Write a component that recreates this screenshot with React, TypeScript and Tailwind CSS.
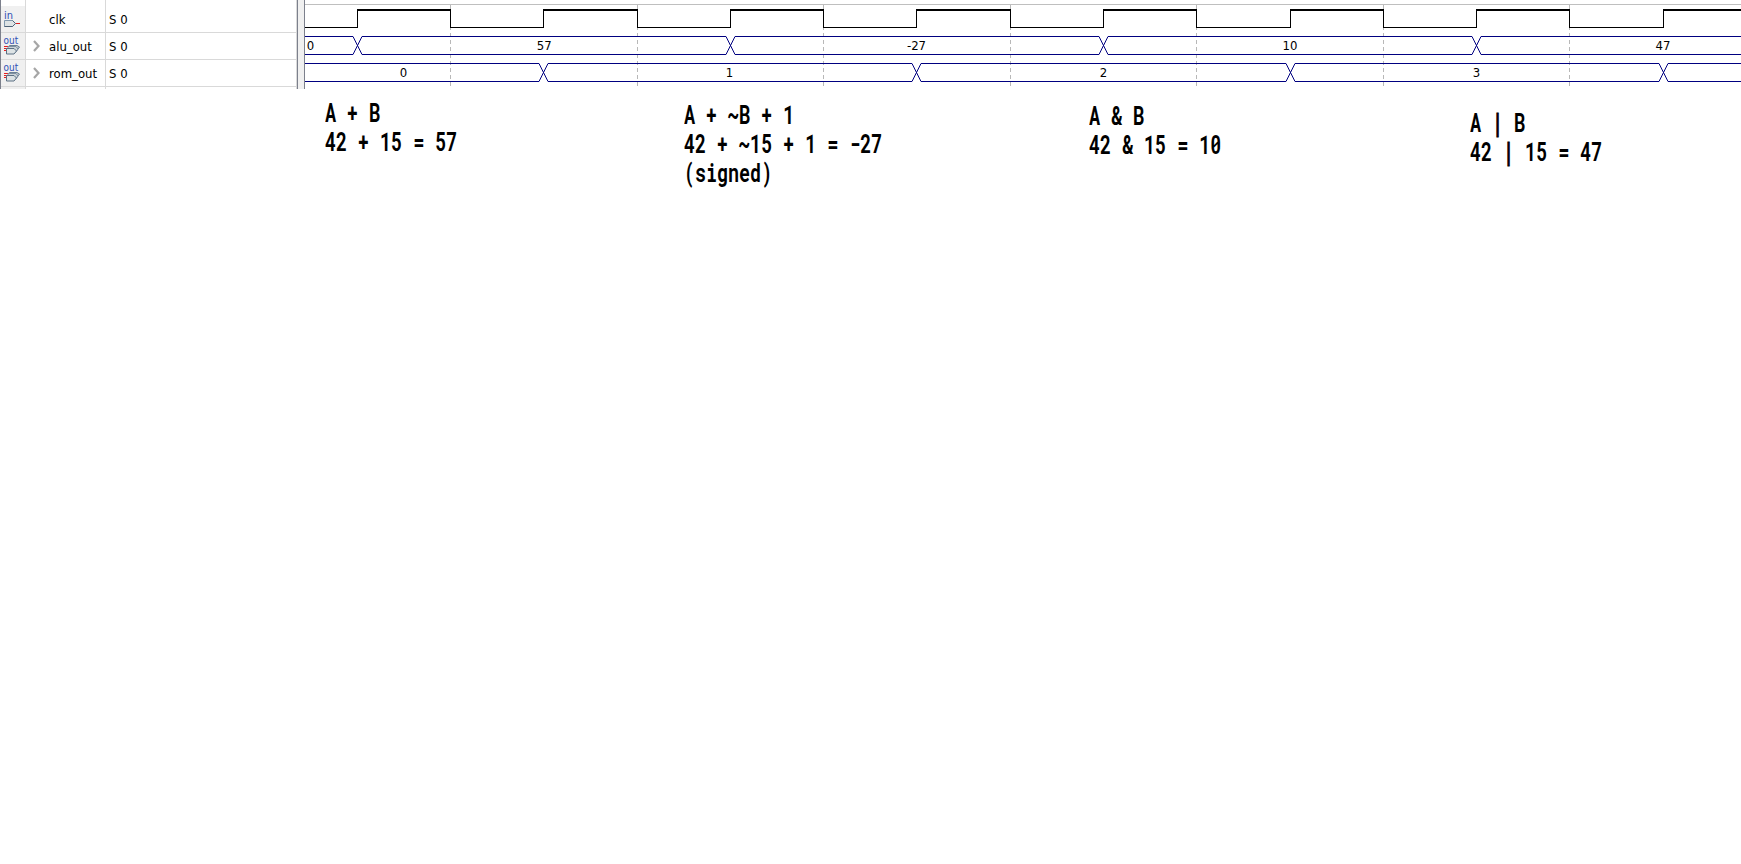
import React from "react";

const UI_FONT = "font-['DejaVu_Sans_Condensed','DejaVu_Sans',sans-serif]";

function InputIcon() {
  return (
    <svg width="24" height="26" viewBox="0 0 24 26" className="block">
      <text x="3" y="13" fontSize="11" fill="#2f4fb5">in</text>
      <path d="M3.5 14.5H11.5L14.5 17.5L11.5 20.5H3.5Z" fill="#dde3e5" stroke="#7f97ad" />
      <path d="M3.5 20.5H11.5L14.5 17.5L11.5 14.5" fill="none" stroke="#4d6277" />
      <path d="M15 17.5H19" stroke="#d22" />
    </svg>
  );
}

function OutputIcon() {
  return (
    <svg width="24" height="26" viewBox="0 0 24 26" className="block">
      <path d="M3 13.5H8M3 15.5H6M3 17.5H5" stroke="#e81c1c" />
      <path d="M8.5 12.5H16L18.5 14L15.5 18H8.5Z" fill="#c3ccd1" stroke="#6c8094" />
      <path d="M7 13.5H15L17 16L14.5 19.5H7Z" fill="#ccd4d8" stroke="#7f90a2" />
      <path d="M5.5 15.5H13L15.5 18L13 21H5.5Z" fill="#dde3e5" stroke="#5c7084" />
      <text x="2.6" y="11" fontSize="11" fill="#2f4fb5" textLength="14.6" lengthAdjust="spacingAndGlyphs">out</text>
    </svg>
  );
}

function Chevron() {
  return (
    <svg width="8" height="12" viewBox="0 0 8 12" className="block">
      <path d="M1 1L5.5 6L1 11" fill="none" stroke="#a6a6a6" strokeWidth="2.2" />
    </svg>
  );
}

const signals = [
  { name: "clk", value: "S 0", bus: false },
  { name: "alu_out", value: "S 0", bus: true },
  { name: "rom_out", value: "S 0", bus: true },
];

function SignalTable() {
  return (
    <div className="flex h-[89px] w-[297px] shrink-0 flex-col border-r border-[#d9d9d9] text-[13px] text-black">
      <div className="flex h-[6px]">
        <div className="w-px bg-[#7c808c]" />
        <div className="w-[25px] border-r border-[#d9d9d9]" />
        <div className="w-[80px] border-r border-[#d9d9d9]" />
      </div>
      {signals.map((s) => (
        <div key={s.name} className="flex h-[27px]">
          <div className="w-px bg-[#7c808c]" />
          <div className="w-[25px] border-r border-b border-[#d9d9d9] bg-[#f0f0f0]">
            {s.bus ? <OutputIcon /> : <InputIcon />}
          </div>
          <div className="flex w-[80px] items-center border-r border-b border-[#d9d9d9]">
            <div className="w-[23px] pl-[7px]">{s.bus && <Chevron />}</div>
            <div className="pt-px leading-[25px] whitespace-nowrap">{s.name}</div>
          </div>
          <div className="flex-1 border-b border-[#d9d9d9] pt-px pl-[3px] leading-[25px]">{s.value}</div>
        </div>
      ))}
      <div className="flex h-[2px]">
        <div className="w-px bg-[#7c808c]" />
        <div className="w-[25px] border-r border-[#d9d9d9] bg-[#f0f0f0]" />
        <div className="w-[80px] border-r border-[#d9d9d9]" />
      </div>
    </div>
  );
}

const ORIGIN = 305;
const END = 1741;
const rising = [357, 543, 730, 916, 1103, 1290, 1476, 1663];
const falling = [450, 637, 823, 1010, 1196, 1383, 1569];

function clockPath() {
  let d = `M${ORIGIN} 27.5`;
  rising.forEach((x, i) => {
    d += `H${x + 0.5}V10`;
    d += i < falling.length ? `H${falling[i] + 0.5}V27.5` : `H${END}`;
  });
  return d;
}

function busLines(edges: number[], top: number, bottom: number) {
  let d = "";
  let start = ORIGIN;
  for (const e of edges) {
    d += `M${start} ${top}H${e - 4}M${start} ${bottom}H${e - 4}`;
    start = e + 5;
  }
  return d + `M${start} ${top}H${END}M${start} ${bottom}H${END}`;
}

function busCrossings(edges: number[], top: number, bottom: number) {
  return edges
    .map((e) => `M${e - 4} ${top}L${e + 5} ${bottom}M${e - 4} ${bottom}L${e + 5} ${top}`)
    .join("");
}

const buses = [
  { edges: [357, 730, 1103, 1476], top: 36.5, bottom: 54.5 },
  { edges: [543, 916, 1290, 1663], top: 63.5, bottom: 81.5 },
];

const labels = [
  { x: 310.5, y: 50, t: "0" },
  { x: 544.3, y: 50, t: "57" },
  { x: 916.5, y: 50, t: "-27" },
  { x: 1290, y: 50, t: "10" },
  { x: 1663, y: 50, t: "47" },
  { x: 403.5, y: 77, t: "0" },
  { x: 729.5, y: 77, t: "1" },
  { x: 1103.5, y: 77, t: "2" },
  { x: 1476.5, y: 77, t: "3" },
];

function Waveforms() {
  return (
    <svg width="1436" height="89" viewBox="305 0 1436 89" className="block shrink-0" fill="none">
      <g shapeRendering="crispEdges">
        <path d="M305 4.5H1741" stroke="#bfbfbf" />
        {falling.map((x) => (
          <path key={x} d={`M${x + 0.5} 5V89`} stroke="#b8b8b8" strokeDasharray="4 3" />
        ))}
        <path d={clockPath()} stroke="#000" />
        {rising.map((x, i) => (
          <path key={x} d={`M${x} 10H${i < falling.length ? falling[i] + 1 : END}`} stroke="#000" strokeWidth="2" />
        ))}
        {buses.map((b) => (
          <path key={b.top} d={busLines(b.edges, b.top, b.bottom)} stroke="#000080" />
        ))}
      </g>
      {buses.map((b) => (
        <path key={b.top} d={busCrossings(b.edges, b.top, b.bottom)} stroke="#000080" />
      ))}
      {labels.map((l) => (
        <text key={l.x} x={l.x} y={l.y} fontSize="13" fill="#000" textAnchor="middle">
          {l.t}
        </text>
      ))}
    </svg>
  );
}

const notes = [
  { box: "w-[359px] pt-[9px]", bar: false, lines: ["A + B", "42 + 15 = 57"] },
  { box: "w-[405px] pt-[11px]", bar: false, lines: ["A + ~B + 1", "42 + ~15 + 1 = -27", "(signed)"] },
  { box: "w-[381px] pt-[12px]", bar: false, lines: ["A & B", "42 & 15 = 10"] },
  { box: "w-[260px] pt-[19px]", bar: true, lines: ["A | B", "42 | 15 = 47"] },
];

function NoteLine({ text, bar }: { text: string; bar: boolean }) {
  if (!bar) return <div>{text}</div>;
  const [left, right] = text.split("|");
  return (
    <div>
      {left}
      <span className="[-webkit-text-stroke:1.1px_black]">|</span>
      {right}
    </div>
  );
}

export default function App() {
  return (
    <div className={`h-[864px] w-[1741px] overflow-hidden bg-white ${UI_FONT}`}>
      <div className="flex h-[89px]">
        <SignalTable />
        <div className="w-[8px] shrink-0 border-x border-[#7c808c] bg-[#f0f0f0]" />
        <Waveforms />
      </div>
      <div className="flex pl-[325px]">
        {notes.map((n) => (
          <div key={n.lines[0]} className={`shrink-0 ${n.box}`}>
            <div className="origin-left scale-x-[0.7345] font-['Roboto_Mono','Liberation_Mono',monospace] text-[25px] leading-[29px] font-bold whitespace-pre text-black">
              {n.lines.map((l) => (
                <NoteLine key={l} text={l} bar={n.bar} />
              ))}
            </div>
          </div>
        ))}
      </div>
    </div>
  );
}
